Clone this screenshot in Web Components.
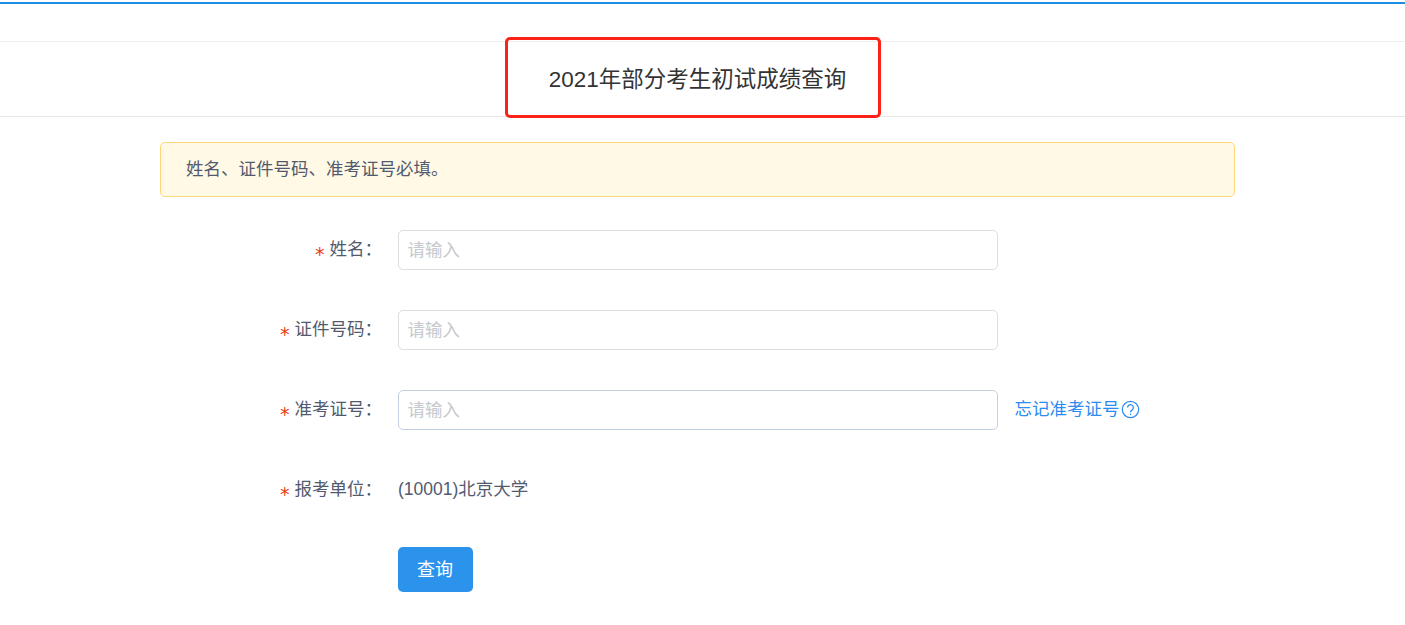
<!DOCTYPE html>
<html lang="zh-CN">
<head>
<meta charset="utf-8">
<title>2021年部分考生初试成绩查询</title>
<style>
  html, body { margin: 0; background: #fff; }
  body {
    font-family: "Liberation Sans", "Noto Sans CJK SC", sans-serif;
    font-size: 17.5px;
    color: #515a6e;
  }
</style>
</head>
<body>
<exam-page>
  <exam-header slot="header">2021年部分考生初试成绩查询</exam-header>
  <exam-alert>姓名、证件号码、准考证号必填。</exam-alert>
  <exam-field label="姓名"><exam-input></exam-input></exam-field>
  <exam-field label="证件号码"><exam-input></exam-input></exam-field>
  <exam-field label="准考证号">
    <exam-input hovered></exam-input>
    <exam-help slot="extra">忘记准考证号</exam-help>
  </exam-field>
  <exam-field label="报考单位" plain>(10001)北京大学</exam-field>
  <exam-field submit><exam-button>查询</exam-button></exam-field>
</exam-page>

<script>
class ExamPage extends HTMLElement {
  constructor() {
    super();
    this.attachShadow({mode: 'open'}).innerHTML = `
      <style>
        :host { display: block; padding-top: 2px; }
        .bar { height: 2px; background: #1c8de0; }
        .nav { height: 37px; border-bottom: 1px solid #eeeeee; }
        .form {
          width: 1075px;
          margin: 25px 0 0 160px;
          display: flex;
          flex-direction: column;
        }
      </style>
      <div class="bar"></div>
      <div class="nav"></div>
      <slot name="header"></slot>
      <div class="form"><slot></slot></div>
    `;
  }
}

class ExamHeader extends HTMLElement {
  constructor() {
    super();
    this.attachShadow({mode: 'open'}).innerHTML = `
      <style>
        :host {
          display: flex;
          justify-content: center;
          align-items: center;
          position: relative;
          box-sizing: content-box;
          height: 70px;
          padding: 0 10px 4px 0;
          border-bottom: 1px solid #e8e8e8;
          font-size: 22.5px;
          color: #333;
        }
        /* red annotation drawn over the screenshot */
        .mark {
          position: absolute;
          left: 505px;
          top: -5px;
          width: 370px;
          height: 75px;
          border: 3px solid #fb2317;
          border-radius: 5px;
        }
      </style>
      <slot></slot>
      <div class="mark"></div>
    `;
  }
}

class ExamAlert extends HTMLElement {
  constructor() {
    super();
    this.attachShadow({mode: 'open'}).innerHTML = `
      <style>
        :host {
          display: flex;
          align-items: center;
          box-sizing: border-box;
          height: 55px;
          padding: 0 0 4px 25px;
          margin-bottom: 33px;
          background: #fff9e6;
          border: 1px solid #ffd77a;
          border-radius: 5px;
        }
      </style>
      <slot></slot>
    `;
  }
}

class ExamField extends HTMLElement {
  constructor() {
    super();
    const root = this.attachShadow({mode: 'open'});
    const label = this.getAttribute('label');
    root.innerHTML = `
      <style>
        :host {
          display: flex;
          align-items: center;
          height: 40px;
          margin-bottom: 40px;
        }
        :host([submit]) { height: 45px; margin-top: -3px; margin-bottom: 0; }
        .label {
          box-sizing: border-box;
          width: 238px;
          padding: 0 16px 6px 0;
          display: flex;
          justify-content: flex-end;
          align-items: center;
        }
        .star {
          color: #ed4014;
          width: 14.5px;
          font-size: 19px;
          line-height: 20px;
          margin-top: 13px;
          font-family: "DejaVu Sans", sans-serif;
        }
        .body { display: flex; align-items: center; }
        :host([plain]) .body { padding-bottom: 6px; }
        .extra { margin-left: 17px; }
      </style>
      <div class="label">${label ? `<span class="star">*</span><span>${label}：</span>` : ''}</div>
      <div class="body"><slot></slot></div>
      <div class="extra"><slot name="extra"></slot></div>
    `;
  }
}

class ExamInput extends HTMLElement {
  constructor() {
    super();
    this.attachShadow({mode: 'open'}).innerHTML = `
      <style>
        :host { display: block; }
        input {
          display: block;
          box-sizing: border-box;
          width: 600px;
          height: 40px;
          padding: 0 8.5px;
          border: 1px solid #dcdee2;
          border-radius: 5px;
          outline: none;
          font: inherit;
          color: inherit;
        }
        :host([hovered]) input { border-color: #c3d2e2; }
        input::placeholder { color: #c5c8ce; opacity: 1; }
      </style>
      <input type="text" placeholder="请输入">
    `;
  }
}

class ExamHelp extends HTMLElement {
  constructor() {
    super();
    this.attachShadow({mode: 'open'}).innerHTML = `
      <style>
        :host {
          display: inline-flex;
          align-items: center;
          color: #2d8cf0;
          margin-left: -0.5px;
        }
        .text { padding-bottom: 6px; }
        svg { display: block; width: 19px; height: 19px; margin: 0 0 1px 1.5px; }
      </style>
      <span class="text"><slot></slot></span>
      <svg viewBox="0 0 19 19" fill="none" stroke="#2d8cf0">
        <circle cx="9.5" cy="9.5" r="8.2" stroke-width="1.2"/>
        <path d="M6.6 7.6a2.9 2.9 0 1 1 4.6 2.3c-1 .7-1.7 1.2-1.7 2.4" stroke-width="1.3"/>
        <path d="M9.5 13.6v1.5" stroke-width="1.4"/>
      </svg>
    `;
  }
}

class ExamButton extends HTMLElement {
  constructor() {
    super();
    this.attachShadow({mode: 'open'}).innerHTML = `
      <style>
        :host { display: block; }
        button {
          display: block;
          box-sizing: border-box;
          width: 75px;
          height: 45px;
          padding: 0 1px 4px 0;
          border: 0;
          border-radius: 5px;
          background: #2b93ec;
          color: #fff;
          font: inherit;
          font-size: 18px;
        }
      </style>
      <button type="button"><slot></slot></button>
    `;
  }
}

customElements.define('exam-page', ExamPage);
customElements.define('exam-header', ExamHeader);
customElements.define('exam-alert', ExamAlert);
customElements.define('exam-field', ExamField);
customElements.define('exam-input', ExamInput);
customElements.define('exam-help', ExamHelp);
customElements.define('exam-button', ExamButton);
</script>
</body>
</html>
